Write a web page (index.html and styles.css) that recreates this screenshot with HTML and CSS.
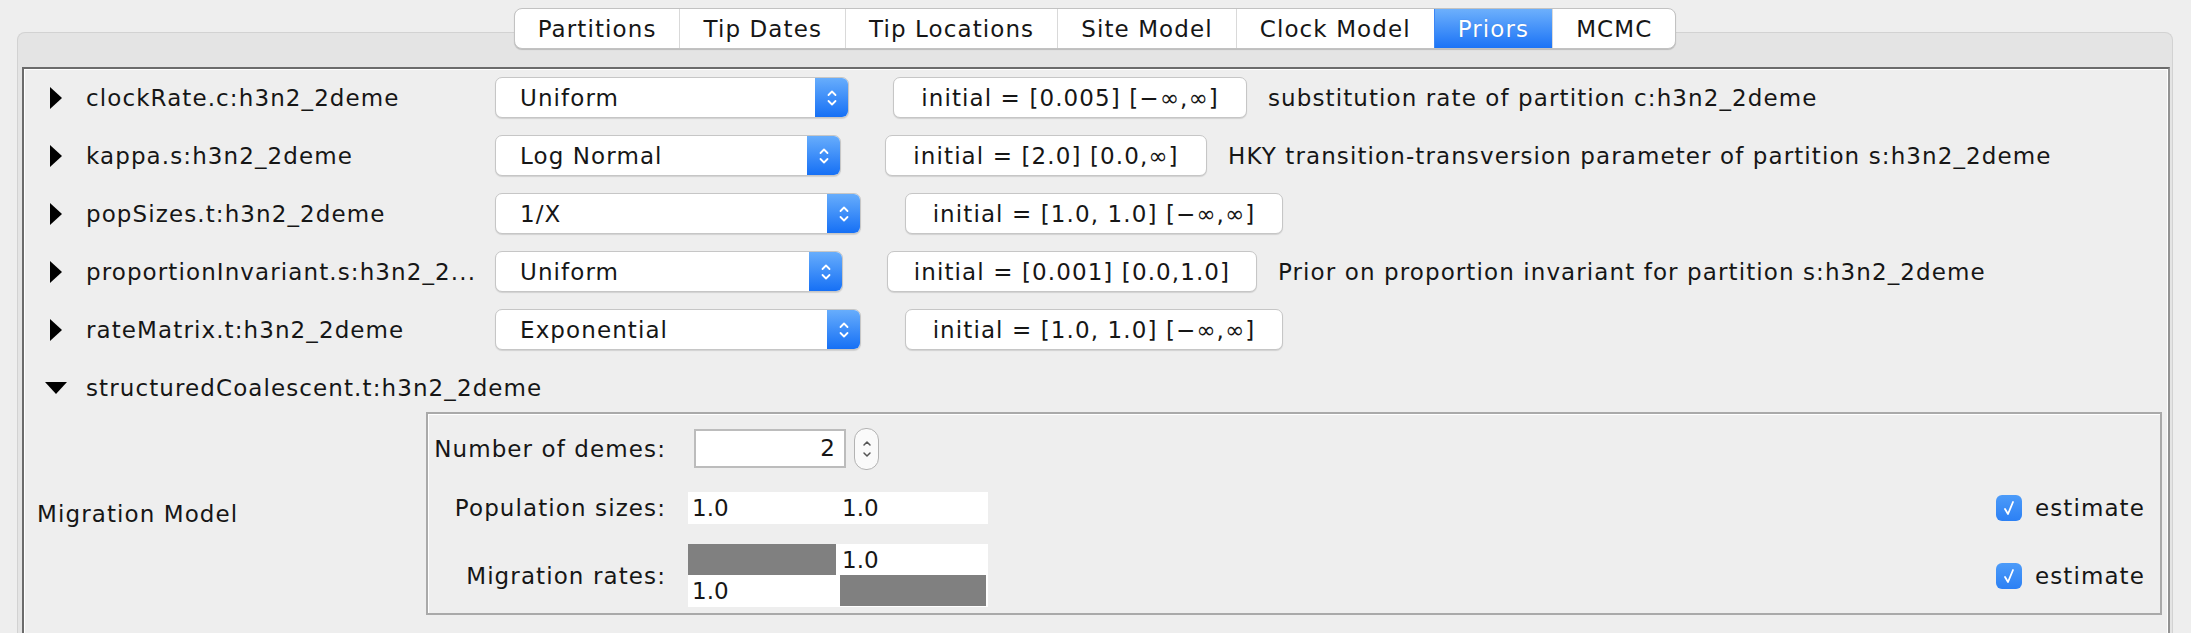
FILE: index.html
```html
<!DOCTYPE html>
<html>
<head>
<meta charset="utf-8">
<title>Priors</title>
<link rel="stylesheet" href="styles.css">
</head>
<body>
<div class="app">
  <div class="tabs">
    <div class="tab">Partitions</div>
    <div class="tab">Tip Dates</div>
    <div class="tab">Tip Locations</div>
    <div class="tab">Site Model</div>
    <div class="tab">Clock Model</div>
    <div class="tab selected">Priors</div>
    <div class="tab">MCMC</div>
  </div>
  <div class="pane">
    <div class="scroll">
      <div class="prior-row">
        <span class="tri-box"><span class="tri-right"></span></span>
        <span class="pname">clockRate.c:h3n2_2deme</span>
        <div class="combo cw354"><span class="ctext">Uniform</span><span class="cbtn"><svg width="12" height="22" viewBox="0 0 12 22"><polyline points="2.5,8 6,4.5 9.5,8" /><polyline points="2.5,14 6,17.5 9.5,14" /></svg></span></div>
        <div class="initbtn iw354">initial = [0.005] [−∞,∞]</div>
        <span class="desc">substitution rate of partition c:h3n2_2deme</span>
      </div>
      <div class="prior-row">
        <span class="tri-box"><span class="tri-right"></span></span>
        <span class="pname">kappa.s:h3n2_2deme</span>
        <div class="combo cw346"><span class="ctext">Log Normal</span><span class="cbtn"><svg width="12" height="22" viewBox="0 0 12 22"><polyline points="2.5,8 6,4.5 9.5,8" /><polyline points="2.5,14 6,17.5 9.5,14" /></svg></span></div>
        <div class="initbtn iw322">initial = [2.0] [0.0,∞]</div>
        <span class="desc">HKY transition-transversion parameter of partition s:h3n2_2deme</span>
      </div>
      <div class="prior-row">
        <span class="tri-box"><span class="tri-right"></span></span>
        <span class="pname">popSizes.t:h3n2_2deme</span>
        <div class="combo cw366"><span class="ctext">1/X</span><span class="cbtn"><svg width="12" height="22" viewBox="0 0 12 22"><polyline points="2.5,8 6,4.5 9.5,8" /><polyline points="2.5,14 6,17.5 9.5,14" /></svg></span></div>
        <div class="initbtn iw378">initial = [1.0, 1.0] [−∞,∞]</div>
      </div>
      <div class="prior-row">
        <span class="tri-box"><span class="tri-right"></span></span>
        <span class="pname">proportionInvariant.s:h3n2_2...</span>
        <div class="combo cw348"><span class="ctext">Uniform</span><span class="cbtn"><svg width="12" height="22" viewBox="0 0 12 22"><polyline points="2.5,8 6,4.5 9.5,8" /><polyline points="2.5,14 6,17.5 9.5,14" /></svg></span></div>
        <div class="initbtn iw370">initial = [0.001] [0.0,1.0]</div>
        <span class="desc">Prior on proportion invariant for partition s:h3n2_2deme</span>
      </div>
      <div class="prior-row">
        <span class="tri-box"><span class="tri-right"></span></span>
        <span class="pname">rateMatrix.t:h3n2_2deme</span>
        <div class="combo cw366"><span class="ctext">Exponential</span><span class="cbtn"><svg width="12" height="22" viewBox="0 0 12 22"><polyline points="2.5,8 6,4.5 9.5,8" /><polyline points="2.5,14 6,17.5 9.5,14" /></svg></span></div>
        <div class="initbtn iw378">initial = [1.0, 1.0] [−∞,∞]</div>
      </div>
      <div class="prior-row">
        <span class="tri-box"><span class="tri-down"></span></span>
        <span class="pname pname-open">structuredCoalescent.t:h3n2_2deme</span>
      </div>
      <div class="mig-row">
        <span class="mig-label">Migration Model</span>
        <div class="mig-box">
          <div class="mrow mrow-demes">
            <span class="mlabel">Number of demes:</span>
            <div class="spin-field">2</div>
            <div class="spin-btn"><svg width="12" height="30" viewBox="0 0 12 30"><polyline points="3,11 6,8 9,11" /><polyline points="3,19 6,22 9,19" /></svg></div>
          </div>
          <div class="mrow mrow-pop">
            <span class="mlabel">Population sizes:</span>
            <div class="ptable">
              <div class="cell">1.0</div>
              <div class="cell">1.0</div>
            </div>
            <div class="spacer"></div>
            <div class="check"><span class="cbox"><svg width="14" height="18" viewBox="0 0 14 18"><polyline points="3,10 6,15 11,3" /></svg></span><span class="clabel">estimate</span></div>
          </div>
          <div class="mrow mrow-mig">
            <span class="mlabel">Migration rates:</span>
            <div class="mtable">
              <div class="cell gray g00"></div>
              <div class="cell">1.0</div>
              <div class="cell">1.0</div>
              <div class="cell gray g11"></div>
            </div>
            <div class="spacer"></div>
            <div class="check"><span class="cbox"><svg width="14" height="18" viewBox="0 0 14 18"><polyline points="3,10 6,15 11,3" /></svg></span><span class="clabel">estimate</span></div>
          </div>
        </div>
      </div>
    </div>
  </div>
</div>
</body>
</html>
```

FILE: styles.css
```css
* { box-sizing: border-box; }

html, body {
  margin: 0;
  padding: 0;
  height: 633px;
  overflow: hidden;
  background: #eeeeee;
  font-family: "DejaVu Sans", "Liberation Sans", sans-serif;
  font-size: 23px;
  letter-spacing: 1.1px;
  color: #161616;
}

.app {
  height: 100%;
  display: flex;
  flex-direction: column;
  padding: 8px 18px 0 17px;
}

/* ---------- tabs ---------- */
.tabs {
  align-self: center;
  display: flex;
  height: 41px;
  position: relative;
  z-index: 1;
  margin-bottom: -17px;
  background: #ffffff;
  border: 1px solid #c2c2c2;
  border-radius: 8px;
  box-shadow: 0 1px 1px rgba(0, 0, 0, 0.18);
  overflow: hidden;
}

.tab {
  display: flex;
  align-items: center;
  padding: 0 23px;
  border-left: 1px solid #d9d9d9;
  white-space: nowrap;
}

.tab:first-child { border-left: none; }

.tab.selected {
  background: linear-gradient(#6db0fc, #1b73f6);
  color: #ffffff;
  border-left-color: #3b86f5;
  text-shadow: 0 0 1px rgba(0, 40, 120, 0.35);
}

/* ---------- pane ---------- */
.pane {
  flex: 1;
  display: flex;
  flex-direction: column;
  background: #e4e4e4;
  border: 1px solid #d2d2d2;
  border-bottom: none;
  border-radius: 8px 8px 0 0;
  padding: 34px 2px 0 4px;
}

.scroll {
  flex: 1;
  background: #eeeeee;
  border-top: 2px solid #6b6b6b;
  border-left: 2px solid #6b6b6b;
  border-right: 2px solid #929292;
  box-shadow: inset 1px 1px 0 #ffffff, inset -1px 0 0 #ffffff;
  padding: 8px 0 0 26px;
}

/* ---------- prior rows ---------- */
.prior-row {
  display: flex;
  align-items: center;
  height: 41px;
  white-space: nowrap;
}

.prior-row + .prior-row { margin-top: 17px; }

.tri-box {
  width: 12px;
  display: flex;
  justify-content: center;
  align-items: center;
}

.tri-right {
  width: 0;
  height: 0;
  border-top: 11px solid transparent;
  border-bottom: 11px solid transparent;
  border-left: 12px solid #000000;
}

.tri-down {
  flex: none;
  width: 0;
  height: 0;
  border-left: 11px solid transparent;
  border-right: 11px solid transparent;
  border-top: 12px solid #000000;
}

.pname {
  margin-left: 24px;
  width: 400px;
  overflow: hidden;
}

.pname-open {
  width: auto;
  overflow: visible;
}

.combo {
  flex: none;
  margin-left: 9px;
  height: 41px;
  display: flex;
  align-items: center;
  background: #ffffff;
  border: 1px solid #c6c6c6;
  border-radius: 7px;
  box-shadow: 0 1px 1px rgba(0, 0, 0, 0.12);
  overflow: hidden;
}

.ctext { padding-left: 24px; }

.cbtn {
  margin-left: auto;
  width: 33px;
  height: 100%;
  display: flex;
  align-items: center;
  justify-content: center;
  background: linear-gradient(#67adfc, #1670f5);
}

.cbtn svg polyline {
  fill: none;
  stroke: #ffffff;
  stroke-width: 1.8;
  stroke-linecap: round;
  stroke-linejoin: round;
}

.cw346 { width: 346px; }
.cw348 { width: 348px; }
.cw354 { width: 354px; }
.cw366 { width: 366px; }

.initbtn {
  flex: none;
  margin-left: 44px;
  height: 41px;
  display: flex;
  align-items: center;
  justify-content: center;
  background: #ffffff;
  border: 1px solid #c6c6c6;
  border-radius: 7px;
  box-shadow: 0 1px 1px rgba(0, 0, 0, 0.12);
}

.iw322 { width: 322px; }
.iw354 { width: 354px; }
.iw370 { width: 370px; }
.iw378 { width: 378px; }

.desc { margin-left: 21px; }

/* ---------- migration model ---------- */
.mig-row {
  margin-top: 4px;
  margin-left: -13px;
  display: flex;
  align-items: center;
}

.mig-label {
  width: 389px;
  flex: none;
}

.mig-box {
  flex: 1;
  margin-right: 6px;
  height: 203px;
  border: 2px solid #a9a9a9;
  box-shadow: inset 1px 1px 0 #ffffff;
  padding: 14px 15px 6px 0;
  display: flex;
  flex-direction: column;
}

.mrow {
  display: flex;
  align-items: center;
}

.mrow-demes { height: 41px; }
.mrow-pop { height: 32px; margin-top: 23px; }
.mrow-mig { height: 63px; margin-top: 20px; }

.mlabel {
  width: 238px;
  flex: none;
  text-align: right;
  white-space: nowrap;
}

.spin-field {
  margin-left: 28px;
  width: 152px;
  height: 39px;
  background: #ffffff;
  border: 2px solid #bcbcbc;
  text-align: right;
  padding-right: 8px;
  line-height: 35px;
}

.spin-btn {
  margin-left: 8px;
  width: 25px;
  height: 42px;
  border: 1px solid #b3b3b3;
  border-radius: 12px;
  background: #fafafa;
  display: flex;
  align-items: center;
  justify-content: center;
}

.spin-btn svg polyline {
  fill: none;
  stroke: #555555;
  stroke-width: 1.5;
  stroke-linecap: round;
  stroke-linejoin: round;
}

.ptable {
  margin-left: 22px;
  display: grid;
  grid-template-columns: 150px 150px;
  height: 32px;
  background: #ffffff;
}

.mtable {
  margin-left: 22px;
  display: grid;
  grid-template-columns: 150px 150px;
  grid-template-rows: 31px 32px;
  background: #ffffff;
}

.cell {
  display: flex;
  align-items: center;
  padding-left: 4px;
  letter-spacing: 0;
}

.gray { background: #808080; }
.g00 { box-shadow: inset -2px 0 0 #ffffff; }
.g11 { box-shadow: inset 2px 0 0 #ffffff, inset -2px -1px 0 #ffffff; }

.spacer { flex: 1; }

.check {
  display: flex;
  align-items: center;
}

.cbox {
  width: 26px;
  height: 26px;
  border-radius: 6px;
  background: linear-gradient(#4c9bf9, #2c80f4);
  display: flex;
  align-items: center;
  justify-content: center;
}

.cbox svg polyline {
  fill: none;
  stroke: #ffffff;
  stroke-width: 1.8;
  stroke-linecap: round;
  stroke-linejoin: round;
}

.clabel { margin-left: 13px; }
```
